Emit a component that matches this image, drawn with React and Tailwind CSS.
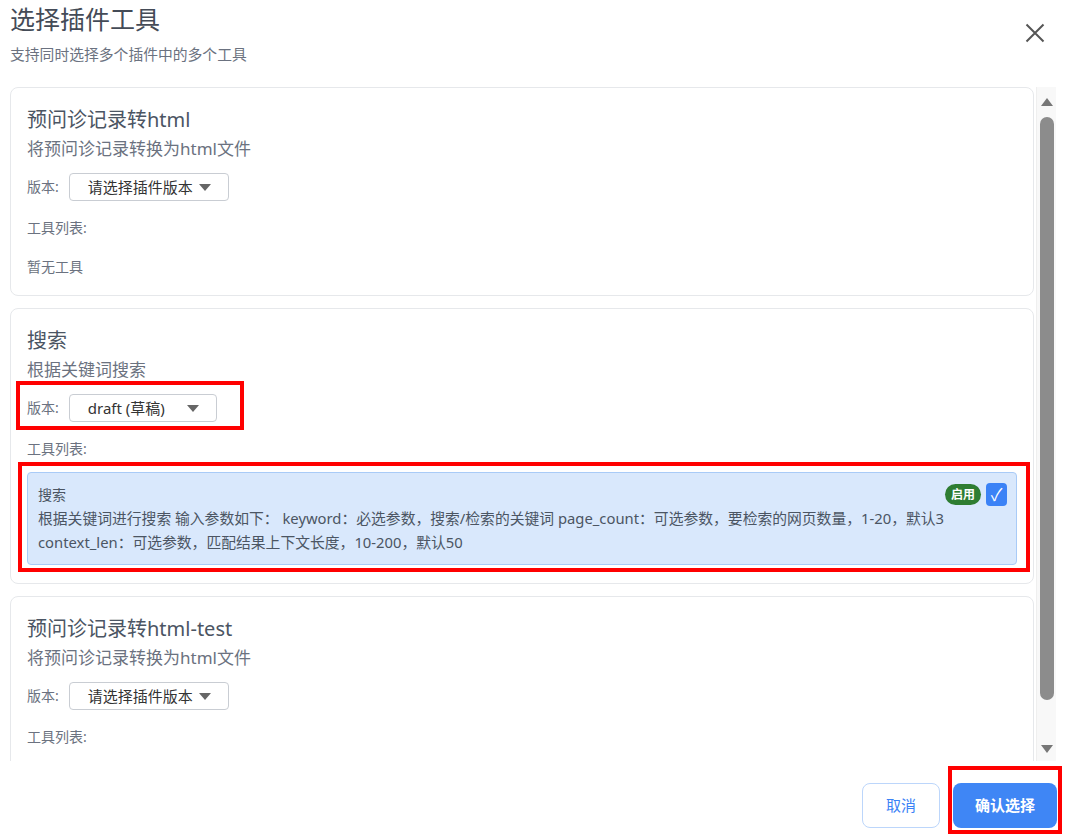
import { useState } from "react";

const font = { fontFamily: '"Noto Sans", "Noto Sans CJK SC", sans-serif' };

function Caret() {
  return (
    <svg width="12" height="7" viewBox="0 0 12 7" className="shrink-0">
      <path d="M0 0 L12 0 L6 7 Z" fill="#666" />
    </svg>
  );
}

function VersionSelect({ value, width }) {
  return (
    <div
      className={`flex items-center justify-between h-[28px] pl-[18px] pr-[17px] border border-[#c9cdd3] rounded-[4px] bg-white text-[15px] text-[#333] ${width}`}
    >
      <span>{value}</span>
      <Caret />
    </div>
  );
}

function PluginCard({ title, desc, version, selectWidth, children }) {
  return (
    <div className="border border-[#e6e8eb] rounded-lg px-4 pt-[18px] pb-[18px]">
      <h2 className="text-xl leading-7 text-[#4b5563]">{title}</h2>
      <p className="mt-[2px] text-[17px] leading-[26px] text-[#6b7280]">{desc}</p>
      <div className="mt-[11px] flex items-center gap-[10px]">
        <span className="text-sm text-[#6b7280]">版本:</span>
        <VersionSelect value={version} width={selectWidth} />
      </div>
      <div className="mt-[17px] text-sm leading-5 text-[#6b7280]">工具列表:</div>
      {children}
    </div>
  );
}

function Scrollbar() {
  return (
    <div className="w-[20px] shrink-0 flex flex-col items-center bg-[#f8f8f8] border-l border-[#efefef] pt-[11px] pb-[8px]">
      <svg width="12" height="8" viewBox="0 0 12 8">
        <path d="M6 0 L12 8 L0 8 Z" fill="#777" />
      </svg>
      <div className="mt-[11px] w-[14px] h-[583px] rounded-full bg-[#8c8c8c]" />
      <div className="flex-1" />
      <svg width="12" height="8" viewBox="0 0 12 8">
        <path d="M0 0 L12 0 L6 8 Z" fill="#777" />
      </svg>
    </div>
  );
}

export default function App() {
  const [checked, setChecked] = useState(true);

  return (
    <div className="relative w-[1074px] h-[837px] bg-white overflow-hidden" style={font}>
      <div className="flex flex-col h-full pl-[10px] pr-[18px]">
        {/* Header */}
        <div className="flex justify-between items-start">
          <div>
            <h1 className="pt-[2px] text-[25px] leading-[34px] text-[#444b57]">选择插件工具</h1>
            <p className="mt-[7px] text-[14.8px] leading-[22px] text-[#6b7280]">
              支持同时选择多个插件中的多个工具
            </p>
          </div>
          <button className="mt-[23px] mr-[11px]">
            <svg width="20" height="20" viewBox="0 0 20 20">
              <path d="M1.5 1.5 L18.5 18.5 M18.5 1.5 L1.5 18.5" stroke="#555" strokeWidth="2" />
            </svg>
          </button>
        </div>

        {/* Plugin list */}
        <div className="mt-[22px] h-[674px] flex gap-[2px]">
          <div className="flex-1 overflow-hidden flex flex-col gap-3">
            <PluginCard
              title="预问诊记录转html"
              desc="将预问诊记录转换为html文件"
              version="请选择插件版本"
              selectWidth="w-[160px]"
            >
              <div className="mt-[19px] text-sm leading-5 text-[#6b7280]">暂无工具</div>
            </PluginCard>

            <PluginCard
              title="搜索"
              desc="根据关键词搜索"
              version="draft (草稿)"
              selectWidth="w-[148px]"
            >
              <div className="mt-[13px] bg-[#d9e8fc] border border-[#a9cbf7] rounded-[4px] pl-[10px] pr-[9px] pt-[10px] pb-[10px]">
                <div className="flex items-center justify-between h-[23px]">
                  <span className="text-[14px] text-[#4b5563]">搜索</span>
                  <div className="flex items-center gap-[5px]">
                    <span className="bg-[#2e7d32] text-white text-xs font-bold rounded-full px-[6px] leading-[21px]">
                      启用
                    </span>
                    <button
                      onClick={() => setChecked(!checked)}
                      className="w-[21px] h-[23px] rounded-[4px] bg-[#3b82f6] text-white text-[17px] leading-[23px] flex items-center justify-center"
                    >
                      {checked ? "✓" : ""}
                    </button>
                  </div>
                </div>
                <p className="text-[14.8px] leading-6 text-[#4b5563]">
                  根据关键词进行搜索 输入参数如下： keyword：必选参数，搜索/检索的关键词 page_count：可选参数，要检索的网页数量，1-20，默认3
                  <br />
                  context_len：可选参数，匹配结果上下文长度，10-200，默认50
                </p>
              </div>
            </PluginCard>

            <PluginCard
              title="预问诊记录转html-test"
              desc="将预问诊记录转换为html文件"
              version="请选择插件版本"
              selectWidth="w-[160px]"
            >
              <div className="mt-[19px] text-sm leading-5 text-[#6b7280]">暂无工具</div>
            </PluginCard>
          </div>
          <Scrollbar />
        </div>

        {/* Footer */}
        <div className="flex justify-end gap-[13px] pt-[22px] -mr-[1px]">
          <button className="w-[78px] h-[45px] rounded-lg border border-[#bcd6fb] bg-white text-[15px] text-[#3b82f6]">
            取消
          </button>
          <button className="w-[104px] h-[45px] rounded-lg bg-[#3f86f5] text-[15px] font-bold text-white">
            确认选择
          </button>
        </div>
      </div>

      {/* Red annotation boxes */}
      <div className="absolute left-[16px] top-[381px] w-[228px] h-[49px] border-4 border-[#ff0000] pointer-events-none" />
      <div className="absolute left-[18px] top-[462px] w-[1012px] h-[110px] border-4 border-[#ff0000] pointer-events-none" />
      <div className="absolute left-[948px] top-[766px] w-[114px] h-[68px] border-4 border-[#ff0000] pointer-events-none" />
    </div>
  );
}
